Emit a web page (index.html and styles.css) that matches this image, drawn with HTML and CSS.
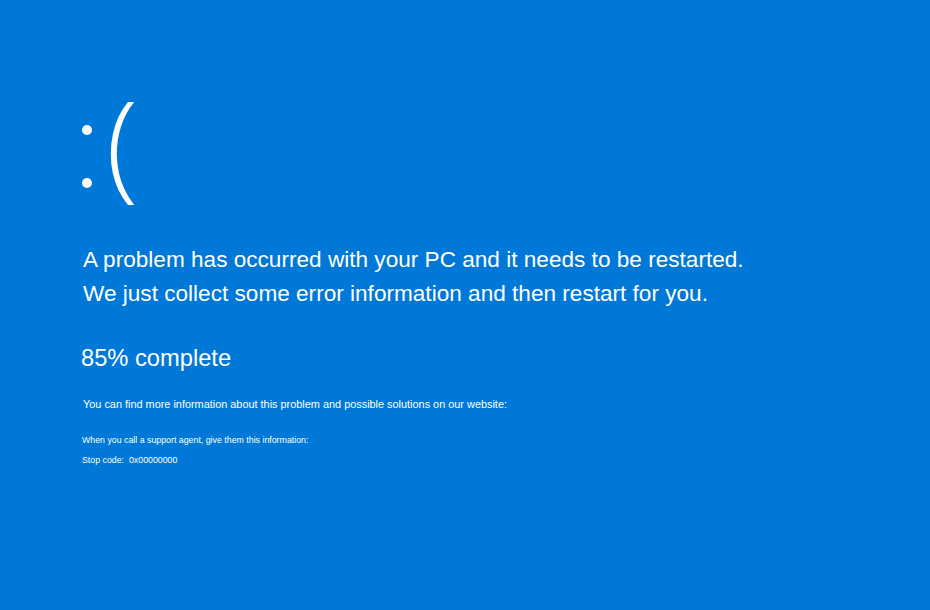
FILE: index.html
```html
<!DOCTYPE html>
<html lang="en">
<head>
<meta charset="utf-8">
<title>Blue screen</title>
<link rel="stylesheet" href="styles.css">
</head>
<body>
<main class="screen">
  <div class="face"><span class="eyes"><span class="dot"></span><span class="dot"></span></span><span class="mouth">(</span></div>
  <p class="headline">A problem has occurred with your PC and it needs to be restarted.<br>We just collect some error information and then restart for you.</p>
  <p class="progress">85% complete</p>
  <p class="info">You can find more information about this problem and possible solutions on our website:</p>
  <p class="small">When you call a support agent, give them this information:</p>
  <p class="small stop">Stop code:&nbsp; 0x00000000</p>
</main>
</body>
</html>
```

FILE: styles.css
```css
html, body {
  margin: 0;
  padding: 0;
  background: #0078d7;
}
body {
  width: 930px;
  height: 610px;
  overflow: hidden;
  font-family: "Liberation Sans", Arial, sans-serif;
  color: #ffffff;
}
.screen {
  padding: 79px 0 0 82px;
}
.face {
  display: flex;
  align-items: flex-start;
  height: 124px;
  gap: 14px;
}
.eyes {
  display: flex;
  flex-direction: column;
  justify-content: space-between;
  height: 63px;
  margin-top: 46px;
}
.dot {
  display: block;
  width: 10px;
  height: 10px;
  border-radius: 50%;
  background: #fff;
}
.mouth {
  font-family: "Open Sans", sans-serif;
  font-weight: 300;
  font-size: 118px;
  line-height: 124px;
}
.headline {
  margin: 40px 0 0 1px;
  font-size: 22.6px;
  line-height: 34px;
}
.progress {
  margin: 32px 0 0 -1px;
  font-size: 23.7px;
  line-height: 30px;
}
.info {
  margin: 23px 0 0 1px;
  font-size: 10.9px;
  line-height: 16px;
}
.small {
  margin: 0;
  font-size: 8.8px;
  line-height: 12px;
}
.info + .small {
  margin-top: 22px;
}
.stop {
  margin-top: 8px;
}
```
